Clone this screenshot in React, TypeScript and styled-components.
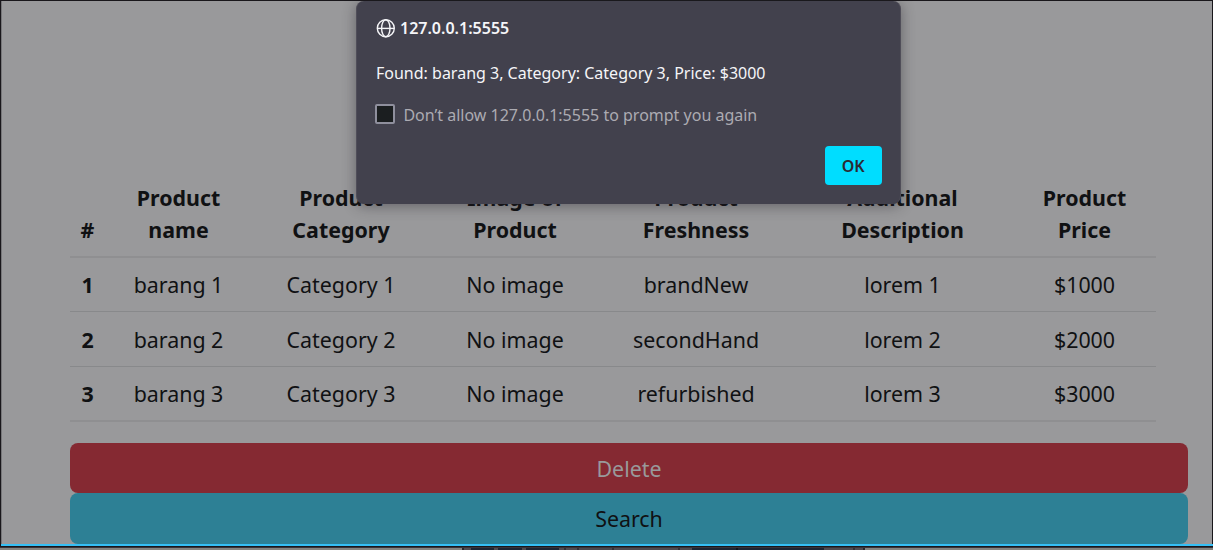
import React from "react";
import styled, { createGlobalStyle } from "styled-components";

const GlobalStyle = createGlobalStyle`
  *, *::before, *::after { box-sizing: border-box; }
  body {
    margin: 0;
    overflow: hidden;
    background: #151318;
    font-family: "Noto Sans", sans-serif;
  }
`;

const Screen = styled.div`
  position: relative;
  display: flex;
  flex-direction: column;
  width: 1213px;
  height: 550px;
  overflow: hidden;
`;

const Page = styled.main`
  display: flex;
  flex-direction: column;
  height: 544px;
  padding: 181px 24px 0 68px;
  border: solid #19171b;
  border-width: 1px 1px 0;
  box-shadow: inset 1px 0 #77777a;
  background: #99999b;
`;

const Table = styled.table`
  width: 1086px;
  margin: 0 0 21px 1px;
  border-collapse: separate;
  border-spacing: 0;
  table-layout: fixed;
  color: #101113;
  font-size: 21.4px;
  line-height: 32px;
  text-align: center;
`;

const HeadCell = styled.th`
  height: 76px;
  padding: 0 0 10px;
  border-bottom: 2px solid #8f8f91;
  vertical-align: bottom;
  font-weight: 700;
`;

const Cell = styled.td<{ $strong?: boolean }>`
  height: 55px;
  padding: 1px 0 0;
  border-bottom: 1px solid #88898b;
  font-weight: ${(p) => (p.$strong ? 700 : 400)};

  tr:first-child > & {
    height: 54px;
    padding-top: 0;
  }

  tr:last-child > & {
    border-bottom: 2px solid #8f8f91;
  }
`;

const Action = styled.button<{ $tone: "danger" | "info" }>`
  flex: none;
  width: 1118px;
  height: ${(p) => (p.$tone === "danger" ? 50.4 : 50.3)}px;
  margin: 0 0 0 1px;
  padding: ${(p) => (p.$tone === "danger" ? "1px 0 0" : "0")};
  border: 0;
  border-radius: 8px;
  background: ${(p) => (p.$tone === "danger" ? "#852932" : "#2d8095")};
  color: ${(p) => (p.$tone === "danger" ? "#99999b" : "#101113")};
  font: 400 21.4px/32px "Noto Sans", sans-serif;
`;

const Edge = styled.div`
  height: 2px;
  margin-left: 1px;
  background: #35bff5;
`;

const Shelf = styled.div`
  display: flex;
  height: 4px;
  border-top: 1px solid #19171b;
  background: #858480;
`;

const Block = styled.span<{ $w: number; $c: string }>`
  flex: none;
  width: ${(p) => p.$w}px;
  border-top: 1px solid #37353a;
  background: ${(p) => p.$c};
`;

const Dialog = styled.section`
  position: absolute;
  top: 1px;
  left: 356px;
  display: flex;
  flex-direction: column;
  width: 545px;
  height: 203px;
  padding: 16px 18px 19px 20px;
  border: 1px solid #504e59;
  border-top: 0;
  border-bottom-color: #42414d;
  border-radius: 8px;
  background: #42414d;
  box-shadow: 0 2px 14px rgba(35, 34, 40, 0.45);
  color: #f5f5f8;
  font-size: 16px;
  line-height: 22px;
`;

const Origin = styled.header`
  display: flex;
  align-items: center;
  gap: 4px;
  height: 22px;
  margin-left: -1px;
  font-weight: 600;
`;

const Message = styled.p`
  margin: 23px 0 20px -1px;
`;

const Option = styled.label`
  display: flex;
  align-items: center;
  gap: 8px;
  margin-left: -1.6px;
  color: #acabb2;
`;

const Check = styled.span`
  width: 20px;
  height: 20px;
  margin-top: -2px;
  border: 2px solid #8f8f9d;
  border-radius: 2px;
  background: #1b1e20;
`;

const OkButton = styled.button`
  align-self: flex-end;
  width: 57.5px;
  height: 39px;
  margin: auto 0 -1px;
  padding: 0;
  border: 0;
  border-radius: 4px;
  background: #00ddff;
  color: #2b2a33;
  font: 600 16px/22px "Noto Sans", sans-serif;
`;

const Globe = () => (
  <svg width="20" height="20" viewBox="0 0 20 20" fill="none" stroke="#f5f5f8" strokeWidth="1.4">
    <circle cx="9.8" cy="10.3" r="8.5" />
    <ellipse cx="9.8" cy="10.3" rx="4.2" ry="8.5" />
    <path d="M1.3 10.4h17" />
  </svg>
);

const widths = [35, 147, 178, 170, 192, 221, 143];
const headings = [
  ["#"],
  ["Product", "name"],
  ["Product", "Category"],
  ["Image of", "Product"],
  ["Product", "Freshness"],
  ["Additional", "Description"],
  ["Product", "Price"],
];
const rows = [
  ["1", "barang 1", "Category 1", "No image", "brandNew", "lorem 1", "$1000"],
  ["2", "barang 2", "Category 2", "No image", "secondHand", "lorem 2", "$2000"],
  ["3", "barang 3", "Category 3", "No image", "refurbished", "lorem 3", "$3000"],
];
const shelf: [number, string][] = [
  [462, "#858480"], [2, "#29262c"], [7, "#504b50"], [23, "#1e2533"], [4, "#504b50"],
  [24, "#1e2533"], [4, "#504b50"], [33, "#1e2533"], [5, "#504b50"], [2, "#343137"],
  [11, "#504b50"], [2, "#343137"], [33, "#4c484d"], [2, "#343137"], [64, "#504b50"],
  [2, "#343137"], [12, "#504b50"], [44, "#1e2533"], [2, "#11131a"], [86, "#1e2533"],
  [29, "#504b50"], [2, "#343137"], [8, "#504b50"], [2, "#29262c"], [348, "#858480"],
];

export default function App() {
  return (
    <Screen>
      <GlobalStyle />
      <Page>
        <Table>
          <colgroup>
            {widths.map((w, i) => (
              <col key={i} width={w} />
            ))}
          </colgroup>
          <thead>
            <tr>
              {headings.map((lines, i) => (
                <HeadCell key={i}>
                  {lines.map((line, j) => (
                    <React.Fragment key={line}>
                      {j > 0 && <br />}
                      {line}
                    </React.Fragment>
                  ))}
                </HeadCell>
              ))}
            </tr>
          </thead>
          <tbody>
            {rows.map((row) => (
              <tr key={row[0]}>
                {row.map((value, i) => (
                  <Cell key={i} $strong={i === 0}>
                    {value}
                  </Cell>
                ))}
              </tr>
            ))}
          </tbody>
        </Table>
        <Action $tone="danger">Delete</Action>
        <Action $tone="info">Search</Action>
      </Page>
      <Edge />
      <Shelf>
        {shelf.map(([w, c], i) => (
          <Block key={i} $w={w} $c={c} />
        ))}
      </Shelf>
      <Dialog>
        <Origin>
          <Globe />
          127.0.0.1:5555
        </Origin>
        <Message>Found: barang 3, Category: Category 3, Price: $3000</Message>
        <Option>
          <Check />
          Don’t allow 127.0.0.1:5555 to prompt you again
        </Option>
        <OkButton>OK</OkButton>
      </Dialog>
    </Screen>
  );
}
